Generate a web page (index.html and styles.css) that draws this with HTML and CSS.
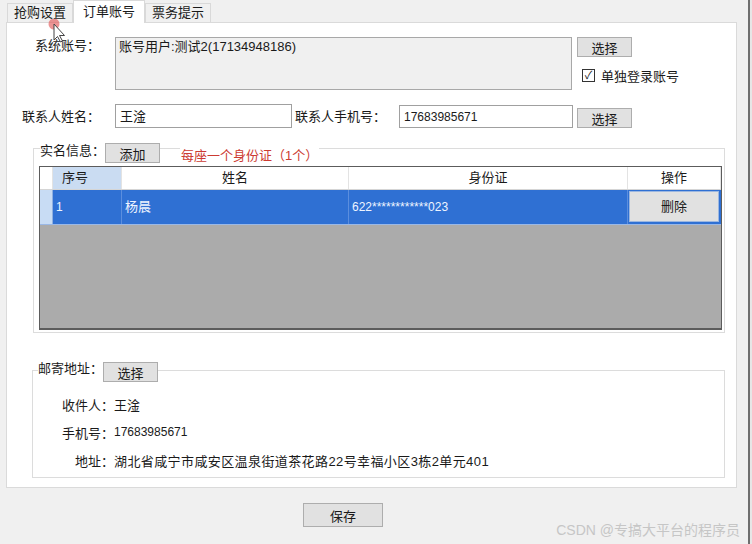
FILE: index.html
```html
<!DOCTYPE html>
<html lang="zh-CN">
<head>
  <meta charset="UTF-8">
  <title>订单账号</title>
  <link rel="stylesheet" href="styles.css">
</head>
<body>
  <div class="window">

    <!-- 标签页 -->
    <div class="tabs">
      <div class="tab">抢购设置</div>
      <div class="tab active">订单账号</div>
      <div class="tab">票务提示</div>
    </div>

    <div class="panel">

      <!-- 系统账号 -->
      <div class="row row-account">
        <span class="lbl">系统账号：</span>
        <div class="memo">账号用户:测试2(17134948186)</div>
        <div class="side">
          <button class="btn">选择</button>
          <label class="check"><span class="box">✓</span>单独登录账号</label>
        </div>
      </div>

      <!-- 联系人 -->
      <div class="row row-contact">
        <span class="lbl">联系人姓名：</span>
        <input class="field field-name" type="text" value="王淦">
        <span class="lbl lbl-phone">联系人手机号：</span>
        <input class="field field-phone" type="text" value="17683985671">
        <button class="btn btn-pick">选择</button>
      </div>

      <!-- 实名信息 -->
      <div class="group group-id">
        <div class="group-head">
          <span class="head-lbl">实名信息：</span>
          <button class="btn">添加</button>
          <span class="tip">每座一个身份证（1个）</span>
        </div>
        <div class="grid">
          <div class="grid-row grid-header">
            <div class="cell c-rh"></div>
            <div class="cell c-no selected">序号</div>
            <div class="cell c-name">姓名</div>
            <div class="cell c-card">身份证</div>
            <div class="cell c-op">操作</div>
          </div>
          <div class="grid-row grid-data">
            <div class="cell c-rh"></div>
            <div class="cell c-no">1</div>
            <div class="cell c-name">杨晨</div>
            <div class="cell c-card">622************023</div>
            <div class="cell c-op"><span class="del">删除</span></div>
          </div>
        </div>
      </div>

      <!-- 邮寄地址 -->
      <div class="group group-mail">
        <div class="group-head">
          <span class="head-lbl">邮寄地址：</span>
          <button class="btn">选择</button>
        </div>
        <div class="mail-info">
          <span class="k">收件人：</span><span class="v">王淦</span>
          <span class="k">手机号：</span><span class="v num">17683985671</span>
          <span class="k">地址：</span><span class="v addr">湖北省咸宁市咸安区温泉街道茶花路22号幸福小区3栋2单元401</span>
        </div>
      </div>

    </div>

    <div class="footer">
      <button class="btn btn-save">保存</button>
    </div>

    <div class="watermark">CSDN @专搞大平台的程序员</div>

    <!-- 鼠标指针标记 -->
    <svg class="cursor" width="24" height="26" viewBox="0 0 24 26">
      <circle cx="6" cy="5" r="5.5" fill="rgba(226,90,90,0.65)"/>
      <path d="M6 5 L6 21 L9.5 17.5 L12.5 23 L14.5 22 L11.5 16.5 L16.5 16.5 Z" fill="#fff" stroke="#444" stroke-width="1"/>
    </svg>
  </div>
</body>
</html>
```

FILE: styles.css
```css
* {
  margin: 0;
  padding: 0;
  box-sizing: border-box;
}

body {
  width: 752px;
  height: 544px;
  overflow: hidden;
  background: #e6e6e6;
  font-family: 'Liberation Sans', 'Noto Sans CJK SC', sans-serif;
  font-size: 13px;
  color: #1a1a1a;
}

.window {
  position: relative;
  width: 750px;
  height: 544px;
  background: #f0f0f0;
  border-right: 2px solid #6e6e6e;
}

/* 标签页 */
.tabs {
  display: flex;
  align-items: flex-end;
  height: 22px;
  padding-left: 7px;
}

.tab {
  height: 19px;
  line-height: 18px;
  padding: 0 6px;
  border: 1px solid #d9d9d9;
  border-bottom: none;
  background: #f0f0f0;
}

.tab.active {
  position: relative;
  z-index: 1;
  height: 23px;
  line-height: 21px;
  margin-bottom: -1px;
  padding: 0 9px;
  background: #fff;
}

.panel {
  margin-left: 6px;
  width: 731px;
  height: 466px;
  background: #fff;
  border: 1px solid #dadada;
}

.row {
  display: flex;
}

.lbl {
  width: 93px;
  margin-right: 15px;
  text-align: right;
  white-space: nowrap;
}

.row-account {
  margin-top: 14px;
}

.row-account .lbl {
  line-height: 18px;
}

.memo {
  width: 457px;
  height: 53px;
  padding: 1px 3px;
  line-height: 16px;
  background: #f0f0f0;
  border: 1px solid #a8a8a8;
}

.side {
  display: flex;
  flex-direction: column;
  margin-left: 5px;
}

.btn {
  width: 55px;
  height: 20px;
  background: #e1e1e1;
  border: 1px solid #adadad;
  font-family: inherit;
  font-size: 13px;
  color: #1a1a1a;
}

.check {
  display: flex;
  align-items: center;
  margin-top: 11px;
  margin-left: 5px;
  height: 14px;
}

.box {
  width: 13px;
  height: 13px;
  margin-right: 6px;
  border: 1px solid #333;
  font-size: 11px;
  line-height: 11px;
  text-align: center;
}

.row-contact {
  align-items: center;
  margin-top: 13px;
  height: 25px;
}

.field {
  height: 24px;
  padding: 0 4px;
  border: 1px solid #a0a0a0;
  font-family: inherit;
  font-size: 13px;
  color: #1a1a1a;
}

.field-name {
  width: 177px;
}

.lbl-phone {
  width: auto;
  margin-left: 3px;
  margin-right: 13px;
}

.field-phone {
  width: 174px;
  height: 23px;
  margin-top: 2px;
  font-size: 12px;
}

.btn-pick {
  margin-left: 4px;
  margin-top: 4px;
}

/* 分组框 */
.group {
  margin-left: 26px;
  width: 692px;
  border: 1px solid #dcdcdc;
}

.group-head {
  display: flex;
  align-items: center;
  height: 20px;
}

.head-lbl {
  background: #fff;
  line-height: 16px;
  align-self: flex-start;
}

.group-id {
  margin-top: 20px;
  padding-bottom: 2px;
}

.group-id .group-head {
  margin-top: -6px;
}

.group-id .head-lbl {
  margin-left: 6px;
}

.tip {
  margin-left: 20px;
  padding: 0 1px;
  background: #fff;
  color: #cc3b32;
  margin-top: 2px;
}

/* 表格 */
.grid {
  margin: 3px 0 0 5px;
  width: 683px;
  height: 164px;
  background: #ababab;
  border: 1px solid #5c5c5c;
  border-bottom-width: 2px;
}

.grid-row {
  display: flex;
}

.cell {
  white-space: nowrap;
  overflow: hidden;
}

.c-rh { width: 13px; }
.c-no { width: 69px; }
.c-name { width: 227px; }
.c-card { width: 279px; }
.c-op { width: 93px; }

.grid-header {
  height: 23px;
  background: #fff;
  border-bottom: 1px solid #d5d5d5;
}

.grid-header .cell {
  line-height: 22px;
  text-align: center;
  border-right: 1px solid #e3e3e3;
}

.grid-header .c-no {
  text-align: left;
  padding-left: 9px;
}

.grid-header .selected {
  background: #cadcf2;
}

.grid-data {
  height: 35px;
  background: #2f70d3;
  border-bottom: 1px solid #9ab8e6;
}

.grid-data .cell {
  line-height: 34px;
  padding-left: 3px;
  color: #eef4ff;
  font-size: 12px;
  border-right: 1px solid #5b8ede;
}

.grid-data .c-name {
  font-size: 13px;
}

.grid-data .c-rh {
  background: #c8dcf4;
  border-right: 1px solid #8fb0e0;
}

.grid-data .c-op {
  padding: 1px 2px 1px 1px;
  border-right: none;
}

.del {
  display: block;
  height: 31px;
  line-height: 30px;
  text-align: center;
  background: #e1e1e1;
  border: 1px solid #9cb7e0;
  font-size: 13px;
  color: #1a1a1a;
}

/* 邮寄地址 */
.group-mail {
  margin-top: 37px;
  margin-left: 25px;
  width: 693px;
  padding-bottom: 3px;
}

.group-mail .group-head {
  margin-top: -9px;
}

.group-mail .head-lbl {
  margin-left: 5px;
  margin-top: -1px;
}

.mail-info {
  display: grid;
  grid-template-columns: 81px 1fr;
  grid-auto-rows: 28px;
  align-items: center;
  margin-top: 8px;
}

.mail-info .k {
  text-align: right;
}

.num {
  font-size: 12px;
}

.addr {
  letter-spacing: 0.4px;
}

.footer {
  padding: 15px 0 0 303px;
}

.btn-save {
  width: 80px;
  height: 24px;
}

.watermark {
  position: absolute;
  right: 8px;
  bottom: 5px;
  font-size: 14px;
  color: #c6c6c6;
}

.cursor {
  position: absolute;
  left: 48px;
  top: 19px;
}
```
